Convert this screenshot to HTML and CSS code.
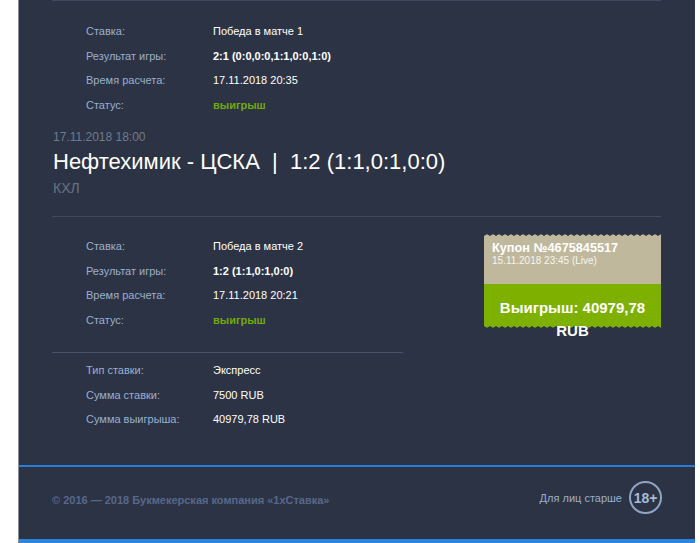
FILE: index.html
```html
<!DOCTYPE html>
<html lang="ru">
<head>
<meta charset="utf-8">
<title>Купон</title>
<link rel="stylesheet" href="styles.css">
</head>
<body>
<div class="panel">
  <main class="content">
    <hr class="rule rule-top">
    <dl class="rows">
      <div class="row"><dt>Ставка:</dt><dd>Победа в матче 1</dd></div>
      <div class="row"><dt>Результат игры:</dt><dd class="strong">2:1 (0:0,0:0,1:1,0:0,1:0)</dd></div>
      <div class="row"><dt>Время расчета:</dt><dd>17.11.2018 20:35</dd></div>
      <div class="row"><dt>Статус:</dt><dd class="win">выигрыш</dd></div>
    </dl>
    <div class="date">17.11.2018 18:00</div>
    <h1 class="match">Нефтехимик - ЦСКА &nbsp;|&nbsp; 1:2 (1:1,0:1,0:0)</h1>
    <div class="league">КХЛ</div>
    <hr class="rule rule-mid">
    <div class="split">
      <div class="left">
        <dl class="rows rows-tall">
          <div class="row"><dt>Ставка:</dt><dd>Победа в матче 2</dd></div>
          <div class="row"><dt>Результат игры:</dt><dd class="strong">1:2 (1:1,0:1,0:0)</dd></div>
          <div class="row"><dt>Время расчета:</dt><dd>17.11.2018 20:21</dd></div>
          <div class="row"><dt>Статус:</dt><dd class="win">выигрыш</dd></div>
        </dl>
        <hr class="rule rule-short">
        <dl class="rows">
          <div class="row"><dt>Тип ставки:</dt><dd>Экспресс</dd></div>
          <div class="row"><dt>Сумма ставки:</dt><dd>7500 RUB</dd></div>
          <div class="row"><dt>Сумма выигрыша:</dt><dd>40979,78 RUB</dd></div>
        </dl>
      </div>
      <aside class="coupon">
        <div class="coupon-head">
          <div class="coupon-title">Купон №4675845517</div>
          <div class="coupon-date">15.11.2018 23:45 (Live)</div>
        </div>
        <div class="coupon-win">Выигрыш: 40979,78 RUB</div>
      </aside>
    </div>
  </main>
  <footer class="footer">
    <div class="copy">© 2016 — 2018 Букмекерская компания «1хСтавка»</div>
    <div class="age"><span>Для лиц старше</span><span class="age-badge">18+</span></div>
  </footer>
  <div class="bottom-bar"></div>
</div>
</body>
</html>
```
FILE: styles.css
```css
* { box-sizing: border-box; }
html, body { margin: 0; height: 100%; background: #fff; overflow: hidden; }
body { font-family: "Liberation Sans", Arial, sans-serif; font-size: 11px; }
.panel {
  margin: 0 5px 0 18px;
  height: 543px;
  background: #2c3345;
  border-left: 1px solid #8b8f98;
  display: flex;
  flex-direction: column;
}
.content { flex: 0 0 465px; padding: 0 34px 0 33px; }
.rule { border: 0; height: 1px; margin: 0; background: #3d4a66; }
.rule-top { margin-bottom: 18px; }
.rows { margin: 0; }
.row { display: flex; height: 24.5px; align-items: center; padding-left: 34px; }
.rows-tall .row { height: 24.6px; }
dt { width: 127px; color: #9ab0ce; }
dd { margin: 0; color: #fff; }
.strong { font-weight: 700; }
.win { color: #74a90a; font-weight: 700; }
.date { color: #6f7a8e; margin: 13px 0 0 1px; font-size: 12px; line-height: 14px; }
.match { margin: 5px 0 0 1px; font-size: 22px; font-weight: 400; line-height: 26px; color: #fff; }
.league { margin: 5px 0 0 1px; font-size: 14px; line-height: 16px; color: #687386; }
.rule-mid { margin-top: 20px; margin-bottom: 17px; }
.split { display: flex; justify-content: space-between; align-items: flex-start; }
.left { width: 351px; }
.rule-short { margin: 19.6px 0 5px; background: #46536e; }
.coupon {
  width: 177px;
  color: #fff;
}
.coupon-head {
  height: 50px;
  padding: 8px 8px;
  background:
    radial-gradient(circle at 3px 3.6px, #bfb89d 2.9px, #2c3345 3.4px) 0 0 / 6px 3px repeat-x,
    #bfb89d;
}
.coupon-title { font-size: 12.7px; font-weight: 700; line-height: 13px; }
.coupon-date { font-size: 10px; line-height: 11px; color: #f8f6ee; }
.coupon-win {
  height: 44px;
  padding: 12px 8px 0;
  font-size: 15px;
  font-weight: 700;
  line-height: 23px;
  text-align: center;
  background:
    radial-gradient(circle at 3px -0.6px, #7eb000 2.9px, #2c3345 3.4px) 0 100% / 6px 3px repeat-x,
    #7eb000;
}
.footer {
  flex: 1;
  border-top: 2px solid #2b7cd3;
  padding: 0 34px 6px 33px;
  display: flex;
  justify-content: space-between;
  align-items: center;
}
.copy { color: #58688b; font-weight: 700; }
.age { display: flex; align-items: center; gap: 7px; color: #9ab0ce; margin: -5px -1px 0 0; }
.age-badge {
  width: 33px;
  height: 33px;
  border: 2px solid #8fa5c4;
  border-radius: 50%;
  display: flex;
  align-items: center;
  justify-content: center;
  font-size: 14px;
  font-weight: 700;
  color: #a9bbd6;
}
.bottom-bar { flex: 0 0 4px; background: #2b86e0; }
```
